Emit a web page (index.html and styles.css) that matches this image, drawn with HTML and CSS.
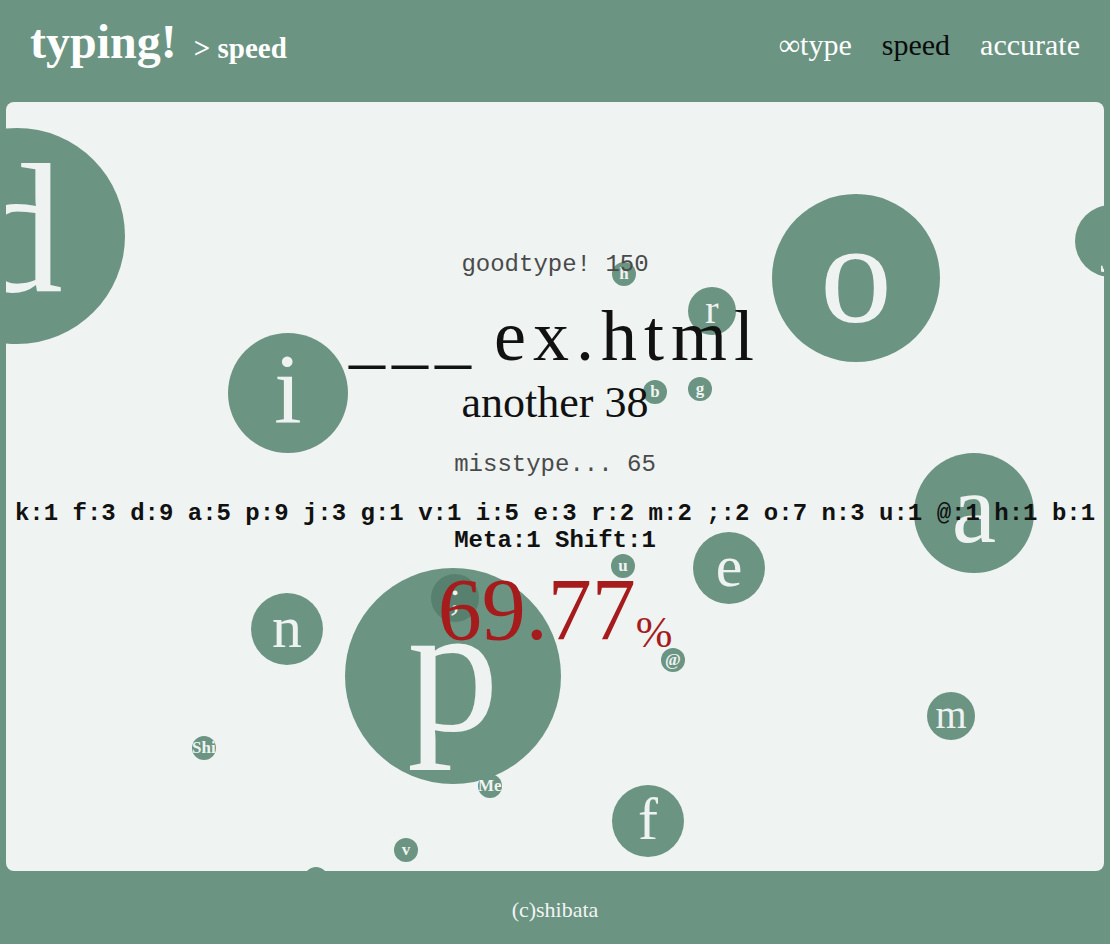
FILE: index.html
```html
<!DOCTYPE html>
<html lang="ja">
<head>
<meta charset="utf-8">
<title>typing! &gt; speed</title>
<link rel="stylesheet" href="styles.css">
</head>
<body>
<header class="topbar">
  <h1 class="brand"><span class="logo">typing!</span><span class="mode">&gt; speed</span></h1>
  <nav class="nav">
    <a class="nav-item">∞type</a>
    <a class="nav-item current">speed</a>
    <a class="nav-item">accurate</a>
  </nav>
</header>
<main class="panel">
  <div class="bubbles">
    <span class="bubble s9" style="left:-97px;top:26px">d</span>
    <span class="bubble s7" style="left:766px;top:92px">o</span>
    <span class="bubble s3" style="left:1069px;top:103px">j</span>
    <span class="bubble s5" style="left:222px;top:231px">i</span>
    <span class="bubble s2" style="left:682px;top:185px">r</span>
    <span class="bubble s1" style="left:606px;top:160px">h</span>
    <span class="bubble s1" style="left:637px;top:278px">b</span>
    <span class="bubble s1" style="left:682px;top:275px">g</span>
    <span class="bubble s5" style="left:908px;top:351px">a</span>
    <span class="bubble s3" style="left:687px;top:430px">e</span>
    <span class="bubble s1" style="left:605px;top:452px">u</span>
    <span class="bubble s3" style="left:245px;top:491px">n</span>
    <span class="bubble s9" style="left:339px;top:466px">p</span>
    <span class="bubble s2 overlap" style="left:425px;top:472px">;</span>
    <span class="bubble s1" style="left:655px;top:546px">@</span>
    <span class="bubble s2" style="left:921px;top:590px">m</span>
    <span class="bubble s1" style="left:186px;top:634px">Shift</span>
    <span class="bubble s1" style="left:472px;top:672px">Meta</span>
    <span class="bubble s3" style="left:606px;top:683px">f</span>
    <span class="bubble s1" style="left:388px;top:736px">v</span>
    <span class="bubble s1" style="left:298px;top:765px">k</span>
  </div>
  <section class="result">
    <p class="good">goodtype! 150</p>
    <p class="word">___ ex.html</p>
    <p class="another">another 38</p>
    <p class="miss">misstype... 65</p>
    <p class="keys">k:1 f:3 d:9 a:5 p:9 j:3 g:1 v:1 i:5 e:3 r:2 m:2 ;:2 o:7 n:3 u:1 @:1 h:1 b:1 Meta:1 Shift:1</p>
    <p class="rate">69.77<span class="pct">%</span></p>
  </section>
</main>
<footer class="footer">(c)shibata</footer>
</body>
</html>
```
FILE: styles.css
```css
html, body {
  margin: 0;
  padding: 0;
}
body {
  background: #6b9482;
  font-family: "Liberation Serif", "Times New Roman", serif;
  width: 1110px;
  height: 944px;
  overflow: hidden;
}
.topbar {
  height: 102px;
  box-sizing: border-box;
  padding: 0 30px;
  display: flex;
  justify-content: space-between;
  align-items: flex-start;
}
.brand {
  margin: 18px 0 0;
  display: flex;
  align-items: baseline;
  gap: 17px;
  color: #ffffff;
  font-weight: bold;
}
.logo {
  font-size: 48px;
  line-height: 48px;
}
.mode {
  font-size: 29px;
  line-height: 29px;
}
.nav {
  margin-top: 30px;
  display: flex;
  gap: 30px;
}
.nav-item {
  font-size: 30px;
  line-height: 30px;
  color: #ffffff;
}
.nav-item.current {
  color: #0b0b0b;
}
.panel {
  position: relative;
  margin: 0 6px;
  height: 769px;
  background: #eff3f2;
  border-radius: 8px;
  overflow: hidden;
}
.bubbles {
  position: absolute;
  inset: 0;
}
.bubble {
  position: absolute;
  display: block;
  border-radius: 50%;
  background: #6b9482;
  color: #eef3f1;
  text-align: center;
  white-space: nowrap;
  overflow: hidden;
  box-sizing: border-box;
}
.bubble.overlap {
  background: #58806e;
}
.s1 { width: 24px; height: 24px; line-height: 24px; font-size: 17px; font-weight: bold; }
.s2 { width: 48px; height: 48px; line-height: 46px; font-size: 40px; }
.s3 { width: 72px; height: 72px; line-height: 68px; font-size: 60px; }
.s5 { width: 120px; height: 120px; line-height: 112px; font-size: 100px; }
.s7 { width: 168px; height: 168px; line-height: 160px; font-size: 144px; }
.s9 { width: 216px; height: 216px; line-height: 202px; font-size: 184px; }
.result {
  position: relative;
  z-index: 1;
  padding-top: 149px;
  text-align: center;
}
.result p {
  margin: 0;
}
.good, .miss {
  font-family: "Liberation Mono", "Courier New", monospace;
  font-size: 24px;
  line-height: 28px;
  color: #4a4a4a;
}
.word {
  margin-top: 21px !important;
  font-size: 72px;
  line-height: 72px;
  letter-spacing: 7px;
  word-spacing: -9px;
  color: #111111;
  white-space: pre;
}
.another {
  margin-top: 9px !important;
  font-size: 44px;
  line-height: 44px;
  color: #111111;
}
.miss {
  margin-top: 26px !important;
}
.keys {
  margin-top: 21px !important;
  font-family: "Liberation Mono", "Courier New", monospace;
  font-weight: bold;
  font-size: 24px;
  line-height: 27px;
  color: #111111;
}
.rate {
  margin-top: 12px !important;
  font-size: 88px;
  line-height: 88px;
  color: #a61b1b;
}
.pct {
  font-size: 44px;
  vertical-align: -8px;
}
.footer {
  height: 73px;
  box-sizing: border-box;
  padding-top: 5px;
  display: flex;
  align-items: center;
  justify-content: center;
  color: #f2f4f3;
  font-size: 22px;
}
```
